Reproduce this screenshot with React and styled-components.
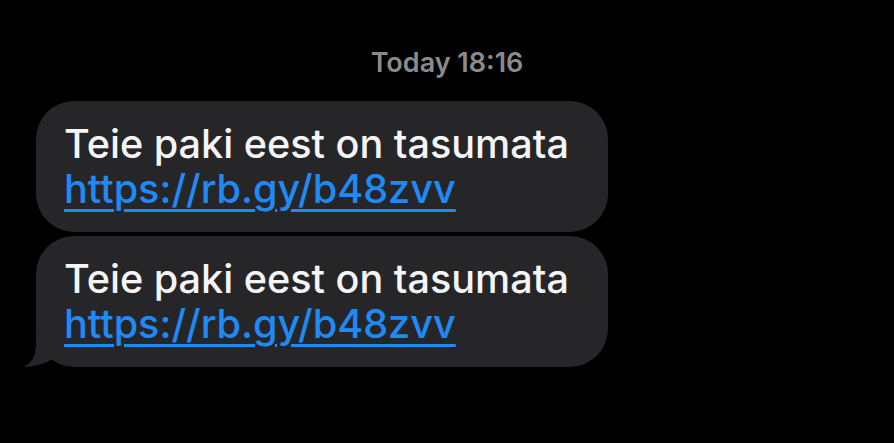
import React from 'react';
import styled, { createGlobalStyle } from 'styled-components';

const GlobalStyle = createGlobalStyle`
  html, body {
    margin: 0;
    padding: 0;
    background: #000;
  }
  body {
    font-family: Inter, "Liberation Sans", Arial, sans-serif;
  }
`;

const Screen = styled.div`
  width: 894px;
  height: 443px;
  background: #000;
  overflow: hidden;
  display: flex;
  flex-direction: column;
  box-sizing: border-box;
  padding-top: 47px;
`;

const Stamp = styled.div`
  text-align: center;
  color: #8a8a8d;
  font-size: 27px;
  font-weight: 600;
  line-height: 32px;
  margin-bottom: 22px;
`;

const Thread = styled.div`
  display: flex;
  flex-direction: column;
  align-items: flex-start;
  gap: 4px;
  padding-left: 36px;
`;

const Bubble = styled.div`
  position: relative;
  background: #262628;
  border-radius: 38px;
  padding: 21px 39px 20px 28px;
  color: #f5f5f7;
  font-size: 39.6px;
  font-weight: 500;
  line-height: 45px;
`;

const Line = styled.div`
  white-space: nowrap;
`;

const Link = styled.a`
  color: #1f8af5;
  text-decoration: underline;
  text-decoration-thickness: 3px;
  text-underline-offset: 6px;
`;

const Tail = styled.svg`
  position: absolute;
  left: -14px;
  bottom: 0;
  width: 34px;
  height: 34px;
`;

const Message = ({ text, url, tail }) => (
  <Bubble>
    {tail && (
      <Tail viewBox="0 0 34 34">
        <path d="M14 0 L30 0 L30 26 C24 30 14 34 1 34 C9 31 14 24 14 10 Z" fill="#262628" />
      </Tail>
    )}
    <Line>{text}</Line>
    <Line>
      <Link href="#">{url}</Link>
    </Line>
  </Bubble>
);

const App = () => {
  const messages = [
    { text: 'Teie paki eest on tasumata', url: 'https://rb.gy/b48zvv' },
    { text: 'Teie paki eest on tasumata', url: 'https://rb.gy/b48zvv', tail: true }
  ];

  return (
    <>
      <GlobalStyle />
      <Screen>
        <Stamp>Today 18:16</Stamp>
        <Thread>
          {messages.map((m, i) => (
            <Message key={i} text={m.text} url={m.url} tail={m.tail} />
          ))}
        </Thread>
      </Screen>
    </>
  );
};

export default App;
